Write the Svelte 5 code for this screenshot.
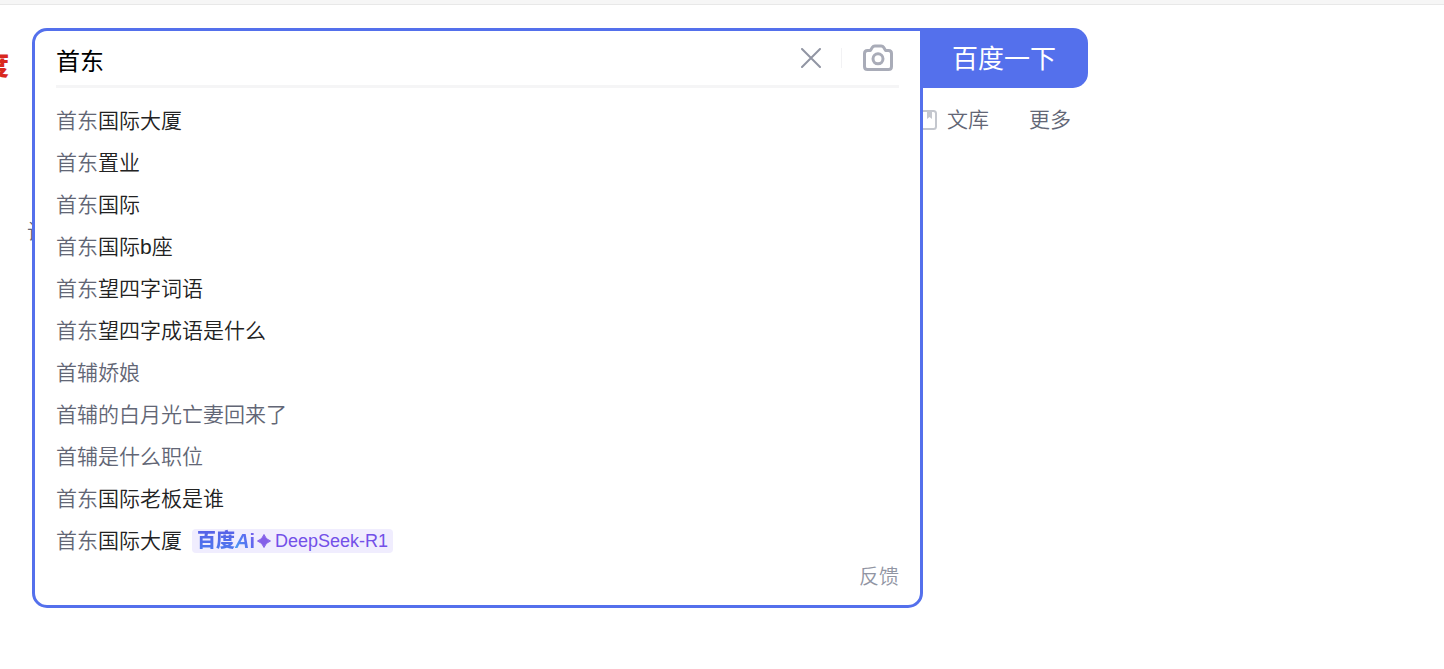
<script>
  let query = $state('首东')

  const suggestions = [
    { match: '首东', rest: '国际大厦' },
    { match: '首东', rest: '置业' },
    { match: '首东', rest: '国际' },
    { match: '首东', rest: '国际b座' },
    { match: '首东', rest: '望四字词语' },
    { match: '首东', rest: '望四字成语是什么' },
    { match: '首辅娇娘', rest: '' },
    { match: '首辅的白月光亡妻回来了', rest: '' },
    { match: '首辅是什么职位', rest: '' },
    { match: '首东', rest: '国际老板是谁' },
    { match: '首东', rest: '国际大厦', ai: true }
  ]

  function clearQuery() {
    query = ''
  }
</script>

<div class="topbar"></div>

<main>
  <div class="side">
    <a class="logo" href="/">度</a>
    <span class="note">设</span>
  </div>

  <form id="search" class="panel" onsubmit={(e) => e.preventDefault()}>
    <div class="field">
      <input type="text" aria-label="搜索" autocomplete="off" bind:value={query} />
      <button class="icon" type="button" aria-label="清空" onclick={clearQuery}>
        <svg width="20" height="20" viewBox="0 0 20 20">
          <path d="M1 1L19 19M19 1L1 19" fill="none" stroke="#9195a3" stroke-width="2" stroke-linecap="round" />
        </svg>
      </button>
      <span class="divider"></span>
      <button class="icon" type="button" aria-label="按图片搜索">
        <svg width="32" height="28" viewBox="0 0 32 28">
          <g fill="none" stroke="#a9acb8" stroke-width="3" stroke-linejoin="round">
            <path d="M5.5 6.5H8.4L10.4 3.3Q11.2 2 12.8 2H19.2Q20.8 2 21.6 3.3L23.6 6.5H26.5Q29.5 6.5 29.5 9.5V22.5Q29.5 25.5 26.5 25.5H5.5Q2.5 25.5 2.5 22.5V9.5Q2.5 6.5 5.5 6.5Z" />
            <circle cx="16" cy="14.8" r="5" />
          </g>
        </svg>
      </button>
    </div>

    <ul>
      {#each suggestions as item}
        <li>
          <a href="#search"><span class="match">{item.match}</span>{item.rest}</a>
          {#if item.ai}
            <a class="badge" href="#search">
              <span class="brand">百度</span>
              <span class="ai"><i>A</i>i</span>
              <svg width="14" height="14" viewBox="0 0 14 14">
                <path d="M7 .5Q8.6 5.4 13.5 7Q8.6 8.6 7 13.5Q5.4 8.6 .5 7Q5.4 5.4 7 .5Z" fill="#8460e8" stroke="#8460e8" stroke-width="1" stroke-linejoin="round" />
              </svg>
              <span class="model">DeepSeek-R1</span>
            </a>
          {/if}
        </li>
      {/each}
    </ul>

    <a class="feedback" href="#search">反馈</a>
  </form>

  <div class="aside">
    <button class="submit" type="submit" form="search">百度一下</button>
    <nav>
      <a href="#wenku">
        <svg width="14" height="20" viewBox="0 0 14 20">
          <path d="M-4 1H10.5Q13 1 13 3.5V16.5Q13 19 10.5 19H-4" fill="none" stroke="#c4c7ce" stroke-width="2" />
          <path d="M4 1H9V9L6.5 7L4 9Z" fill="#c4c7ce" />
        </svg>
        文库
      </a>
      <a href="#more">更多</a>
    </nav>
  </div>
</main>

<style>
  :global(body) {
    background: #fff;
    font-family: "Liberation Sans", "Noto Sans CJK SC", sans-serif;
    font-weight: 350;
  }
  a {
    color: inherit;
    text-decoration: none;
  }
  button {
    padding: 0;
    border: 0;
    background: none;
    font: inherit;
    cursor: pointer;
  }
  svg {
    display: block;
  }
  .topbar {
    height: 4px;
    background: #f6f6f6;
    border-bottom: 1px solid #e8e8e8;
  }
  main {
    display: flex;
    align-items: flex-start;
    padding: 23px 0 40px;
  }
  .side {
    flex: none;
    display: flex;
    flex-direction: column;
    width: 32px;
    overflow: hidden;
  }
  .logo {
    display: flex;
    justify-content: flex-end;
    width: 9px;
    margin-top: 18px;
    font-size: 26px;
    font-weight: 900;
    line-height: 40px;
    white-space: nowrap;
    color: #d9281e;
  }
  .note {
    margin: 130px 0 0 27px;
    font-size: 21px;
    line-height: 32px;
    white-space: nowrap;
    color: #626675;
  }
  .panel {
    flex: 0 1 891px;
    box-sizing: border-box;
    min-width: 0;
    padding: 0 21px 13px;
    border: 3px solid #5470ec;
    border-radius: 15px;
    border-top-right-radius: 0;
    background: #fff;
  }
  .field {
    display: flex;
    align-items: center;
    height: 54px;
    border-bottom: 3px solid #f5f5f6;
  }
  input {
    flex: 1;
    min-width: 0;
    height: 48px;
    padding: 2px 0 0;
    box-sizing: border-box;
    border: 0;
    outline: 0;
    background: none;
    font: inherit;
    font-size: 24px;
    font-weight: 400;
    color: #000;
  }
  .icon {
    flex: none;
  }
  .divider {
    width: 1px;
    height: 20px;
    margin: 0 20px;
    background: #f2f2f4;
  }
  .field .icon:last-child {
    margin-right: 5px;
  }
  ul {
    margin: 12px 0 0;
    padding: 0;
    list-style: none;
  }
  li {
    display: flex;
    align-items: center;
    height: 42px;
    font-size: 21px;
    line-height: 42px;
    color: #222;
  }
  .match {
    color: #626675;
  }
  .badge {
    display: flex;
    align-items: center;
    height: 24px;
    margin-left: 10px;
    padding: 0 5px;
    border-radius: 4px;
    background: #f0edfe;
    line-height: 24px;
  }
  .brand,
  .ai {
    font-size: 19px;
    font-weight: 900;
    color: transparent;
    background: linear-gradient(#5a5fe6, #4a7cf0);
    background-clip: text;
  }
  .ai {
    font-size: 20px;
    background-image: linear-gradient(60deg, #4aa8f5, #5a6af0 60%, #8460e8);
    background-clip: text;
  }
  .badge svg {
    margin: 0 4px 0 2px;
  }
  .model {
    font-size: 18px;
    font-weight: 400;
    color: #7350e8;
  }
  .feedback {
    display: block;
    width: 40px;
    margin-left: auto;
    font-size: 20px;
    line-height: 30px;
    color: #9195a3;
  }
  .aside {
    flex: none;
  }
  .submit {
    display: block;
    width: 165px;
    height: 60px;
    padding: 0 3px 3px 0;
    border-radius: 0 15px 15px 0;
    background: #5470ec;
    font-size: 26px;
    font-weight: 400;
    color: #fff;
  }
  nav {
    display: flex;
    gap: 40px;
    margin-top: 16px;
    font-size: 21px;
    line-height: 32px;
    color: #626675;
  }
  nav a {
    display: flex;
    align-items: center;
    gap: 10px;
  }
</style>
